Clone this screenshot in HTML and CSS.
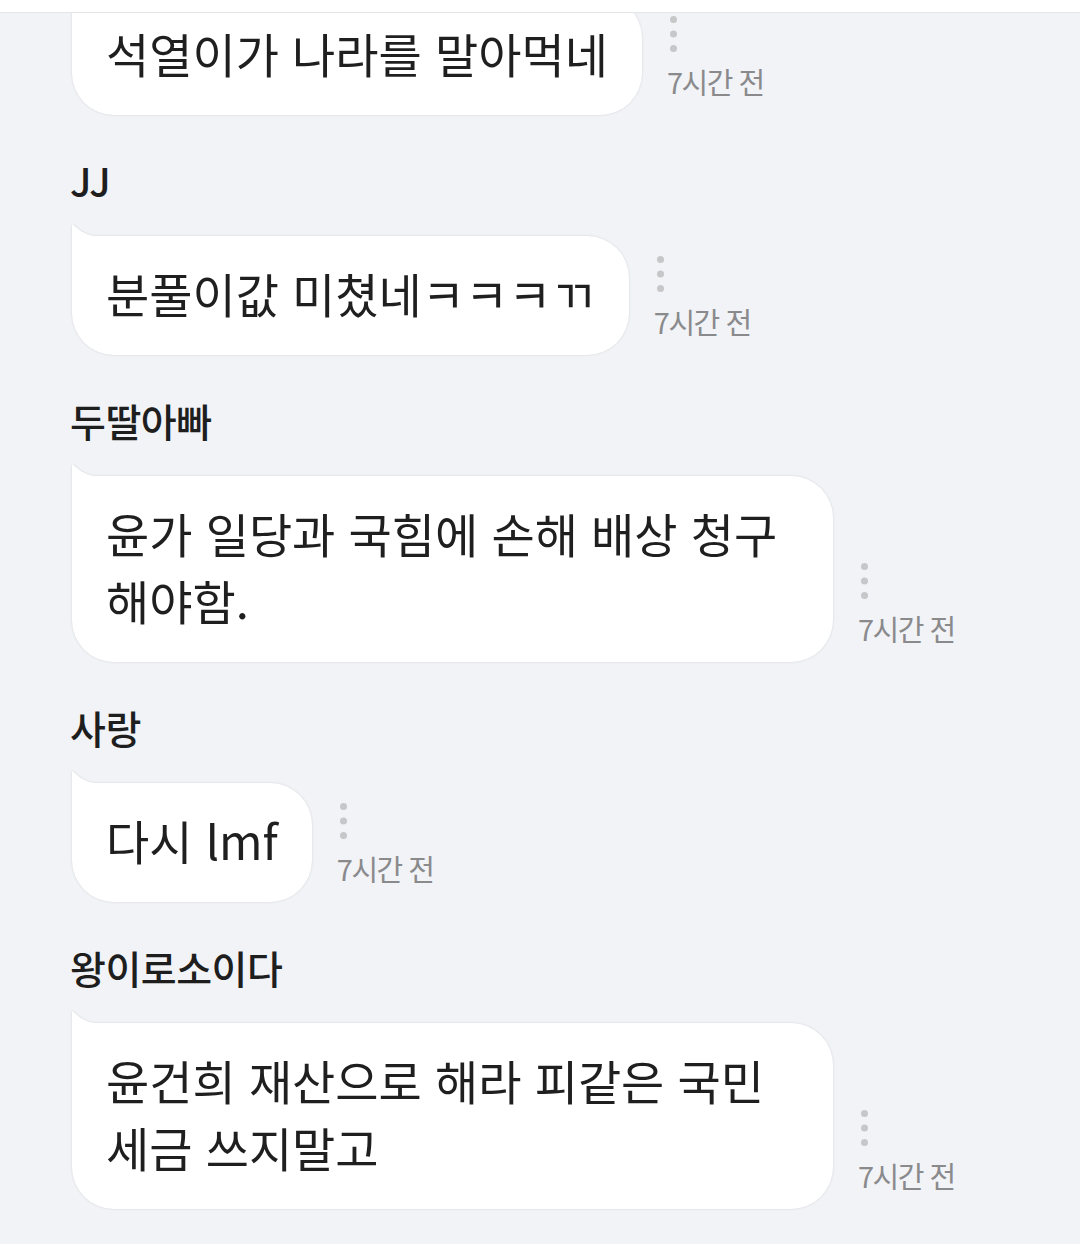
FILE: index.html
```html
<!DOCTYPE html>
<html lang="ko">
<head>
    <meta charset="UTF-8">
    <meta name="viewport" content="width=device-width, initial-scale=1.0">
    <title>댓글</title>
    <link rel="stylesheet" href="styles.css">
</head>
<body>
    <div class="topbar"></div>

    <div class="feed">
        <div class="comment first">
            <div class="row">
                <div class="bubble">석열이가 나라를 말아먹네</div>
                <div class="side">
                    <svg class="more" width="7" height="36" viewBox="0 0 7 36"><circle cx="3.5" cy="3.5" r="3.5"/><circle cx="3.5" cy="18" r="3.5"/><circle cx="3.5" cy="32.5" r="3.5"/></svg>
                    <span class="time">7시간 전</span>
                </div>
            </div>
        </div>

        <div class="comment">
            <div class="name">JJ</div>
            <div class="row">
                <div class="bubble">분풀이값 미쳤네ㅋㅋㅋㄲ</div>
                <div class="side">
                    <svg class="more" width="7" height="36" viewBox="0 0 7 36"><circle cx="3.5" cy="3.5" r="3.5"/><circle cx="3.5" cy="18" r="3.5"/><circle cx="3.5" cy="32.5" r="3.5"/></svg>
                    <span class="time">7시간 전</span>
                </div>
            </div>
        </div>

        <div class="comment">
            <div class="name">두딸아빠</div>
            <div class="row">
                <div class="bubble">윤가 일당과 국힘에 손해 배상 청구 해야함.</div>
                <div class="side">
                    <svg class="more" width="7" height="36" viewBox="0 0 7 36"><circle cx="3.5" cy="3.5" r="3.5"/><circle cx="3.5" cy="18" r="3.5"/><circle cx="3.5" cy="32.5" r="3.5"/></svg>
                    <span class="time">7시간 전</span>
                </div>
            </div>
        </div>

        <div class="comment">
            <div class="name">사랑</div>
            <div class="row">
                <div class="bubble">다시 lmf</div>
                <div class="side">
                    <svg class="more" width="7" height="36" viewBox="0 0 7 36"><circle cx="3.5" cy="3.5" r="3.5"/><circle cx="3.5" cy="18" r="3.5"/><circle cx="3.5" cy="32.5" r="3.5"/></svg>
                    <span class="time">7시간 전</span>
                </div>
            </div>
        </div>

        <div class="comment">
            <div class="name">왕이로소이다</div>
            <div class="row">
                <div class="bubble">윤건희 재산으로 해라 피같은 국민 세금 쓰지말고</div>
                <div class="side">
                    <svg class="more" width="7" height="36" viewBox="0 0 7 36"><circle cx="3.5" cy="3.5" r="3.5"/><circle cx="3.5" cy="18" r="3.5"/><circle cx="3.5" cy="32.5" r="3.5"/></svg>
                    <span class="time">7시간 전</span>
                </div>
            </div>
        </div>
    </div>
</body>
</html>
```

FILE: styles.css
```css
body {
    margin: 0;
    padding: 0;
    background: #f2f3f7;
    font-family: "Noto Sans CJK KR", "Noto Sans", sans-serif;
    color: #1f1f1f;
    min-height: 1244px;
}
.topbar {
    position: fixed;
    top: 0;
    left: 0;
    right: 0;
    height: 12px;
    background: #ffffff;
    border-bottom: 1px solid #e4e5e9;
    z-index: 2;
}
.feed {
    padding-left: 72px;
    margin-top: -4px;
}
.comment {
    padding-top: 40px;
}
.comment.first {
    padding-top: 0;
}
.name {
    margin-left: -2px;
    font-size: 39px;
    font-weight: 500;
    line-height: 50px;
    letter-spacing: -0.5px;
    color: #1e1e1e;
    margin-bottom: 31px;
}
.row {
    display: flex;
    align-items: stretch;
}
.bubble {
    position: relative;
    max-width: 761px;
    box-sizing: border-box;
    padding: 23px 34px 29px;
    background: #ffffff;
    border-radius: 0 42px 42px 42px;
    font-size: 47px;
    line-height: 67px;
    word-break: keep-all;
    filter: drop-shadow(0 0 1px rgba(0, 0, 0, 0.13));
}
.bubble::before {
    content: "";
    position: absolute;
    top: -12px;
    left: 0;
    width: 26px;
    height: 13px;
    background: #ffffff;
    clip-path: polygon(0 0, 15% 25%, 35% 55%, 60% 80%, 100% 100%, 0 100%);
}
.side {
    display: flex;
    flex-direction: column;
    justify-content: flex-end;
    align-items: flex-start;
    margin-left: 25px;
    padding-bottom: 16px;
}
.more {
    fill: #c7c7c9;
    margin-left: 3px;
    margin-bottom: 11px;
}
.time {
    font-size: 29px;
    line-height: 36px;
    letter-spacing: -1.5px;
    color: #8a8a8c;
    white-space: nowrap;
}
```
